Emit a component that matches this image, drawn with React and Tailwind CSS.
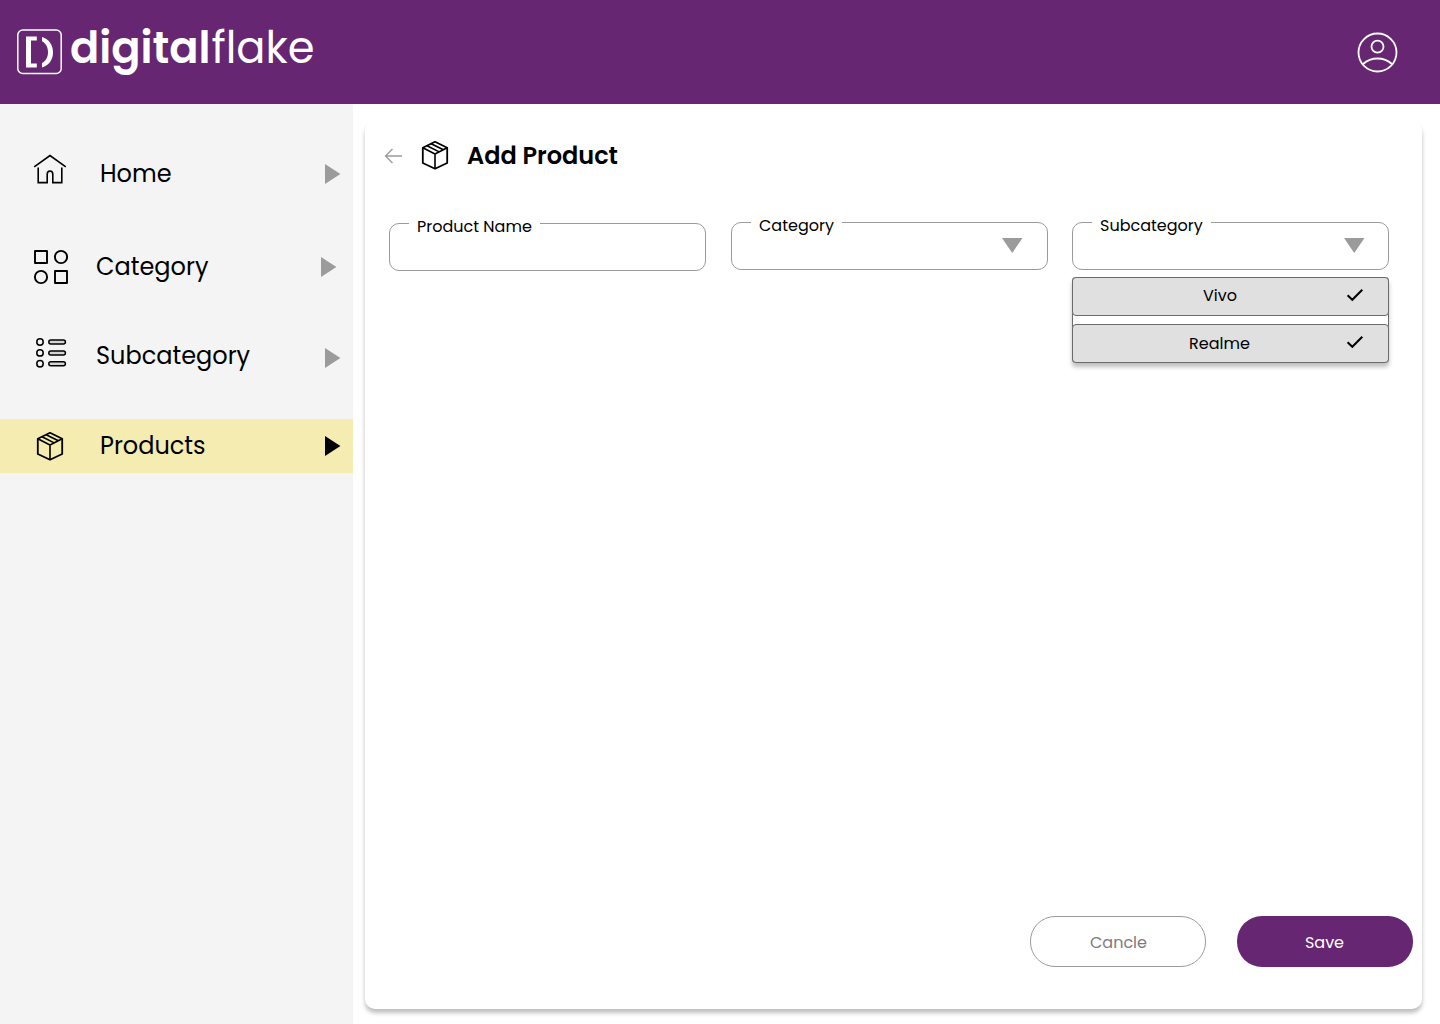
const ink = "font-[Poppins,Inter,sans-serif] whitespace-nowrap";

function Logo() {
  return (
    <svg width="300" height="52" viewBox="0 0 300 52" fill="none" className="-mt-1 block overflow-visible">
      <rect x="1.8" y="6" width="43.4" height="43.4" rx="5" stroke="#fff" strokeWidth="1.5" />
      <path d="M10 12.6H20.8V16.6H15V39.6H20.8V43.4H10Z" fill="#fff" />
      <path d="M26 13C33 15 37 21 37 28.2C37 35.5 33 41.5 26 43.4V38.9C30 37 32 32.8 32 28.2C32 23.7 30 19.2 26 17.2Z" fill="#fff" />
      <g className="font-[Poppins,Inter,sans-serif]" fill="#fff" fontSize="44.5">
        <text x="54" y="39" fontWeight="600" textLength="140.5" lengthAdjust="spacingAndGlyphs">digital</text>
        <text x="195.5" y="39" fontWeight="400" textLength="103" lengthAdjust="spacingAndGlyphs">flake</text>
      </g>
    </svg>
  );
}

function UserIcon() {
  return (
    <svg width="42" height="42" viewBox="0 0 42 42" fill="none" stroke="#fff" strokeWidth="1.8" className="block">
      <circle cx="21.5" cy="21.5" r="19" />
      <circle cx="21.5" cy="15.7" r="6" />
      <path d="M7 33C11.5 29 16.5 27.5 21.5 27.5S31.5 29 36 33" />
    </svg>
  );
}

function HomeIcon() {
  return (
    <svg width="36" height="36" viewBox="0 0 36 36" fill="none" stroke="#000" strokeWidth="1.6" className="block overflow-visible">
      <path d="M2.2 10.8L18 -.4L33.8 10.8" />
      <path d="M6.2 11.5V26.6H15.2V18.3C15.2 13.8 20.8 13.8 20.8 18.3V26.6H29.8V11.5" />
    </svg>
  );
}

function CategoryIcon() {
  return (
    <svg width="36" height="36" viewBox="0 0 36 36" fill="none" stroke="#000" strokeWidth="1.9" strokeLinejoin="round" className="block">
      <rect x="3" y="2" width="12" height="12" />
      <circle cx="29" cy="8" r="6.1" />
      <circle cx="9" cy="28" r="6.1" />
      <rect x="23" y="22" width="12" height="12" />
    </svg>
  );
}

function ListIcon() {
  return (
    <svg width="36" height="36" viewBox="0 0 36 36" fill="none" stroke="#000" strokeWidth="1.5" className="block">
      {[4, 14.9, 25.8].map((y) => (
        <g key={y}>
          <circle cx="8" cy={y} r="3.2" />
          <rect x="16.8" y={y - 2} width="16.6" height="4" rx="2" fill="#d4d4d4" />
        </g>
      ))}
    </svg>
  );
}

function BoxIcon() {
  return (
    <svg width="36" height="36" viewBox="0 0 36 36" fill="none" stroke="#000" strokeWidth="1.8" strokeLinejoin="round" className="block">
      <path d="M18 4.8L30.2 10.8V26L18 31.8L5.8 26V10.8Z" />
      <path d="M5.8 10.8L18 17L30.2 10.8M18 17V31.8M14.2 6.7L26.4 12.7M10 8.8L22.2 14.9" strokeWidth="1.6" />
    </svg>
  );
}

function Check() {
  return (
    <svg width="18" height="14" viewBox="0 0 18 14" fill="none" stroke="#000" strokeWidth="2" className="-mt-[3px] block">
      <path d="M1.6 7.2L6.3 11.8L16.3 1.8" />
    </svg>
  );
}

function NavItem({ icon, label, className, labelClass, arrowClass }) {
  return (
    <div className={`flex h-[54px] items-center pl-8 ${className}`}>
      {icon}
      <span className={`text-2xl ${ink} ${labelClass}`}>{label}</span>
      <svg width="16" height="20" viewBox="0 0 16 20" className={`ml-auto block ${arrowClass}`}>
        <path d="M0 0L15.4 10L0 20Z" fill="currentColor" />
      </svg>
    </div>
  );
}

function Field({ label, select, className = "", arrowClass = "", children }) {
  return (
    <div className={`relative h-12 w-[317px] rounded-[10px] border border-[#9b9b9b] ${className}`}>
      <label className={`absolute -top-[9px] left-[19px] flex h-6 items-center bg-white px-2 text-base ${ink}`}>{label}</label>
      {select && (
        <div className={`flex h-full items-center justify-end pb-0.5 ${arrowClass}`}>
          <svg width="21" height="15" viewBox="0 0 21 15" className="block">
            <path d="M0 0H20.5L10.25 15Z" fill="#9b9b9b" />
          </svg>
        </div>
      )}
      {children}
    </div>
  );
}

function Option({ label, labelClass = "" }) {
  return (
    <div className="grid h-[39px] grid-cols-[1fr_auto] items-center rounded border border-[#6b6b6b] bg-[#e0e0e0] pr-6">
      <span className={`pl-5 text-center text-base ${ink} ${labelClass}`}>{label}</span>
      <Check />
    </div>
  );
}

export default function App() {
  return (
    <div className="flex h-[1024px] w-[1440px] flex-col overflow-hidden bg-white text-black">
      <header className="flex h-[104px] shrink-0 items-center justify-between bg-[#662671] pr-[42px] pl-4">
        <Logo />
        <UserIcon />
      </header>
      <div className="flex min-h-0 flex-1">
        <nav className="w-[353px] shrink-0 bg-[#f4f4f4] pt-[43px]">
          <NavItem icon={<HomeIcon />} label="Home" className="pr-3" labelClass="ml-8" arrowClass="text-[#9b9b9b]" />
          <NavItem icon={<CategoryIcon />} label="Category" className="mt-[39px] pr-4" labelClass="ml-7" arrowClass="text-[#9b9b9b]" />
          <NavItem icon={<ListIcon />} label="Subcategory" className="mt-[35px] pr-3" labelClass="ml-7" arrowClass="mt-1 text-[#9b9b9b]" />
          <NavItem icon={<BoxIcon />} label="Products" className="mt-9 bg-[#f4ecb0] pr-3" labelClass="ml-8" arrowClass="text-black" />
        </nav>
        <main className="mt-[17px] ml-3 flex h-[888px] w-[1057px] flex-col rounded-[10px] bg-white shadow-[0_4px_4px_rgba(0,0,0,0.25)]">
          <div className="flex h-[70px] items-center pl-[19px]">
            <svg width="18" height="16" viewBox="0 0 18 16" fill="none" stroke="#9b9b9b" strokeWidth="1.3" className="block">
              <path d="M18 8H1.5M8.5 1L1.5 8L8.5 15" />
            </svg>
            <div className="-mt-0.5 ml-[15px]"><BoxIcon /></div>
            <h1 className={`ml-[14px] text-2xl font-semibold ${ink}`}>Add Product</h1>
          </div>
          <div className="flex pt-[31px] pl-6">
            <Field label="Product Name" className="mt-px" />
            <Field label="Category" select className="ml-[25px]" arrowClass="pr-6" />
            <Field label="Subcategory" select className="ml-6" arrowClass="pr-[23px]">
              <div className="absolute top-[54px] -left-px flex w-[317px] flex-col gap-2 rounded bg-white shadow-[0_4px_4px_rgba(0,0,0,0.25),inset_1px_0_#6b6b6b,inset_-1px_0_#6b6b6b]">
                <Option label="Vivo" labelClass="-mt-0.5 ml-px" />
                <Option label="Realme" />
              </div>
            </Field>
          </div>
          <div className="mt-auto flex justify-end gap-[31px] pr-[9px] pb-[42px]">
            <button className={`h-[51px] w-44 rounded-[25px] border border-[#9b9b9b] pt-0.5 pl-px text-base text-[#7c7c7c] ${ink}`}>Cancle</button>
            <button className={`h-[51px] w-44 rounded-[25px] bg-[#662671] pt-0.5 pr-px text-base text-white ${ink}`}>Save</button>
          </div>
        </main>
      </div>
    </div>
  );
}
